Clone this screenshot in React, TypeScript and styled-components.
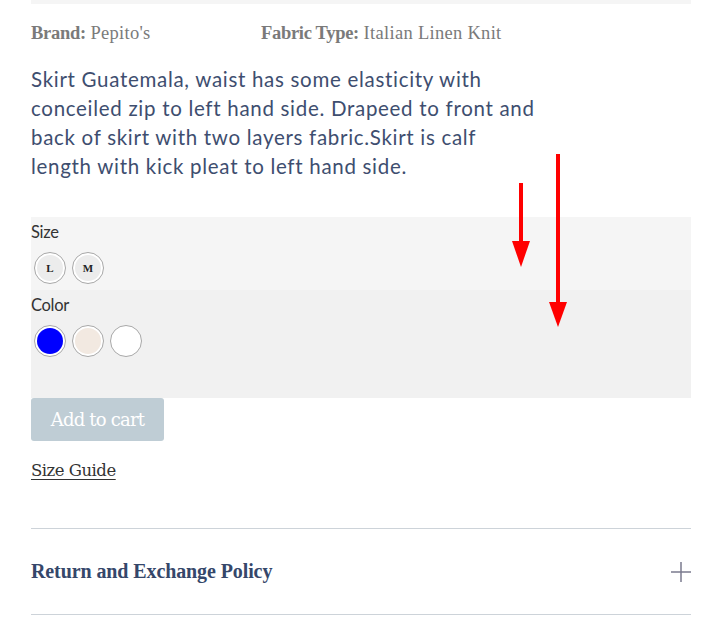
import React from "react";
import styled, { createGlobalStyle } from "styled-components";

const Global = createGlobalStyle`
  html, body { margin: 0; padding: 0; background: #fff; }
  body { font-family: "Lato", "Open Sans", sans-serif; }
`;

const Page = styled.div`
  position: relative;
  width: 660px;
  margin-left: 31px;
  display: flex;
  flex-direction: column;
`;

const TopBar = styled.div`
  height: 4px;
  background: #f5f5f5;
`;

const MetaRow = styled.div`
  display: flex;
  padding-top: 19px;
  height: 28px;
  font-family: "Liberation Serif", serif;
  font-size: 18.5px;
  color: #7a7a7a;
`;

const MetaItem = styled.div<{ $w?: number }>`
  width: ${(p) => (p.$w ? `${p.$w}px` : "auto")};
  b { font-weight: 700; letter-spacing: -0.3px; }
  span { font-weight: 400; letter-spacing: 0.3px; }
`;

const Description = styled.p`
  margin: 14px 0 36px;
  width: 507px;
  font-family: "Lato", sans-serif;
  font-size: 20.5px;
  line-height: 29px;
  color: #3e4e6f;
  letter-spacing: 0.7px;
`;

const Section = styled.div<{ $bg: string; $h: number }>`
  background: ${(p) => p.$bg};
  height: ${(p) => p.$h}px;
  box-sizing: border-box;
  display: flex;
  flex-direction: column;
`;

const Label = styled.div`
  font-family: "Lato", sans-serif;
  font-size: 16.5px;
  color: #333;
  line-height: 20px;
  padding-top: 5px;
  letter-spacing: -0.3px;
`;

const Options = styled.div`
  display: flex;
  gap: 6px;
  padding-left: 3px;
  margin-top: 10px;
`;

const Swatch = styled.div<{ $fill: string }>`
  width: 32px;
  height: 32px;
  box-sizing: border-box;
  border-radius: 50%;
  border: 1px solid #a8a8a8;
  padding: 2px;
  background: #fff;
  display: flex;
  & > div {
    flex: 1;
    border-radius: 50%;
    background: ${(p) => p.$fill};
    display: flex;
    align-items: center;
    justify-content: center;
    font-family: "Liberation Serif", serif;
    font-weight: 700;
    font-size: 11px;
    color: #222;
  }
`;

const CartButton = styled.button`
  width: 133px;
  height: 43px;
  border: none;
  border-radius: 3px;
  background: #bfcdd5;
  color: #fff;
  font-family: "DejaVu Serif", serif;
  font-size: 18px;
  letter-spacing: -0.8px;
  padding: 0;
  cursor: pointer;
`;

const SizeGuide = styled.a`
  margin-top: 20px;
  font-family: "DejaVu Serif", serif;
  font-size: 16.5px;
  color: #333;
  text-decoration: underline;
  text-underline-offset: 3px;
  letter-spacing: -0.5px;
  align-self: flex-start;
`;

const Accordion = styled.div`
  margin-top: 48px;
  border-top: 1px solid #cdd3d9;
  border-bottom: 1px solid #cdd3d9;
  height: 85px;
  display: flex;
  align-items: center;
  justify-content: space-between;
`;

const AccTitle = styled.div`
  font-family: "Liberation Serif", serif;
  font-size: 20px;
  font-weight: 700;
  color: #35476a;
  letter-spacing: -0.1px;
`;

const Arrow = styled.svg<{ $x: number; $y: number }>`
  position: absolute;
  left: ${(p) => p.$x}px;
  top: ${(p) => p.$y}px;
  overflow: visible;
`;

function RedArrow({ x, top, headTop, bottom }: { x: number; top: number; headTop: number; bottom: number }) {
  const h = bottom - top;
  return (
    <Arrow $x={x - 31 - 10} $y={top} width={20} height={h} viewBox={`0 0 20 ${h}`}>
      <rect x={8} y={0} width={4} height={headTop - top + 1} fill="#ff0000" />
      <polygon points={`1,${headTop - top} 19,${headTop - top} 10,${h}`} fill="#ff0000" />
    </Arrow>
  );
}

export default function App() {
  return (
    <>
      <Global />
      <Page>
        <TopBar />
        <MetaRow>
          <MetaItem $w={230}>
            <b>Brand:</b> <span>Pepito's</span>
          </MetaItem>
          <MetaItem>
            <b>Fabric Type:</b> <span>Italian Linen Knit</span>
          </MetaItem>
        </MetaRow>
        <Description>
          Skirt Guatemala, waist has some elasticity with conceiled zip to left hand side. Drapeed to front and back of skirt with two layers fabric.Skirt is calf length with kick pleat to left hand side.
        </Description>
        <Section $bg="#f5f5f5" $h={73}>
          <Label>Size</Label>
          <Options>
            <Swatch $fill="#ececec"><div>L</div></Swatch>
            <Swatch $fill="#ececec"><div>M</div></Swatch>
          </Options>
        </Section>
        <Section $bg="#f1f1f1" $h={108}>
          <Label>Color</Label>
          <Options>
            <Swatch $fill="#0000ff"><div /></Swatch>
            <Swatch $fill="#f2e9e1"><div /></Swatch>
            <Swatch $fill="#ffffff"><div /></Swatch>
          </Options>
        </Section>
        <div>
          <CartButton>Add to cart</CartButton>
        </div>
        <SizeGuide href="#">Size Guide</SizeGuide>
        <Accordion>
          <AccTitle>Return and Exchange Policy</AccTitle>
          <svg width="20" height="20" viewBox="0 0 20 20">
            <path d="M10 0V20M0 10H20" stroke="#7b7b8f" strokeWidth="1.5" />
          </svg>
        </Accordion>
        <RedArrow x={521} top={183} headTop={241} bottom={267} />
        <RedArrow x={558} top={154} headTop={302} bottom={327} />
      </Page>
    </>
  );
}
